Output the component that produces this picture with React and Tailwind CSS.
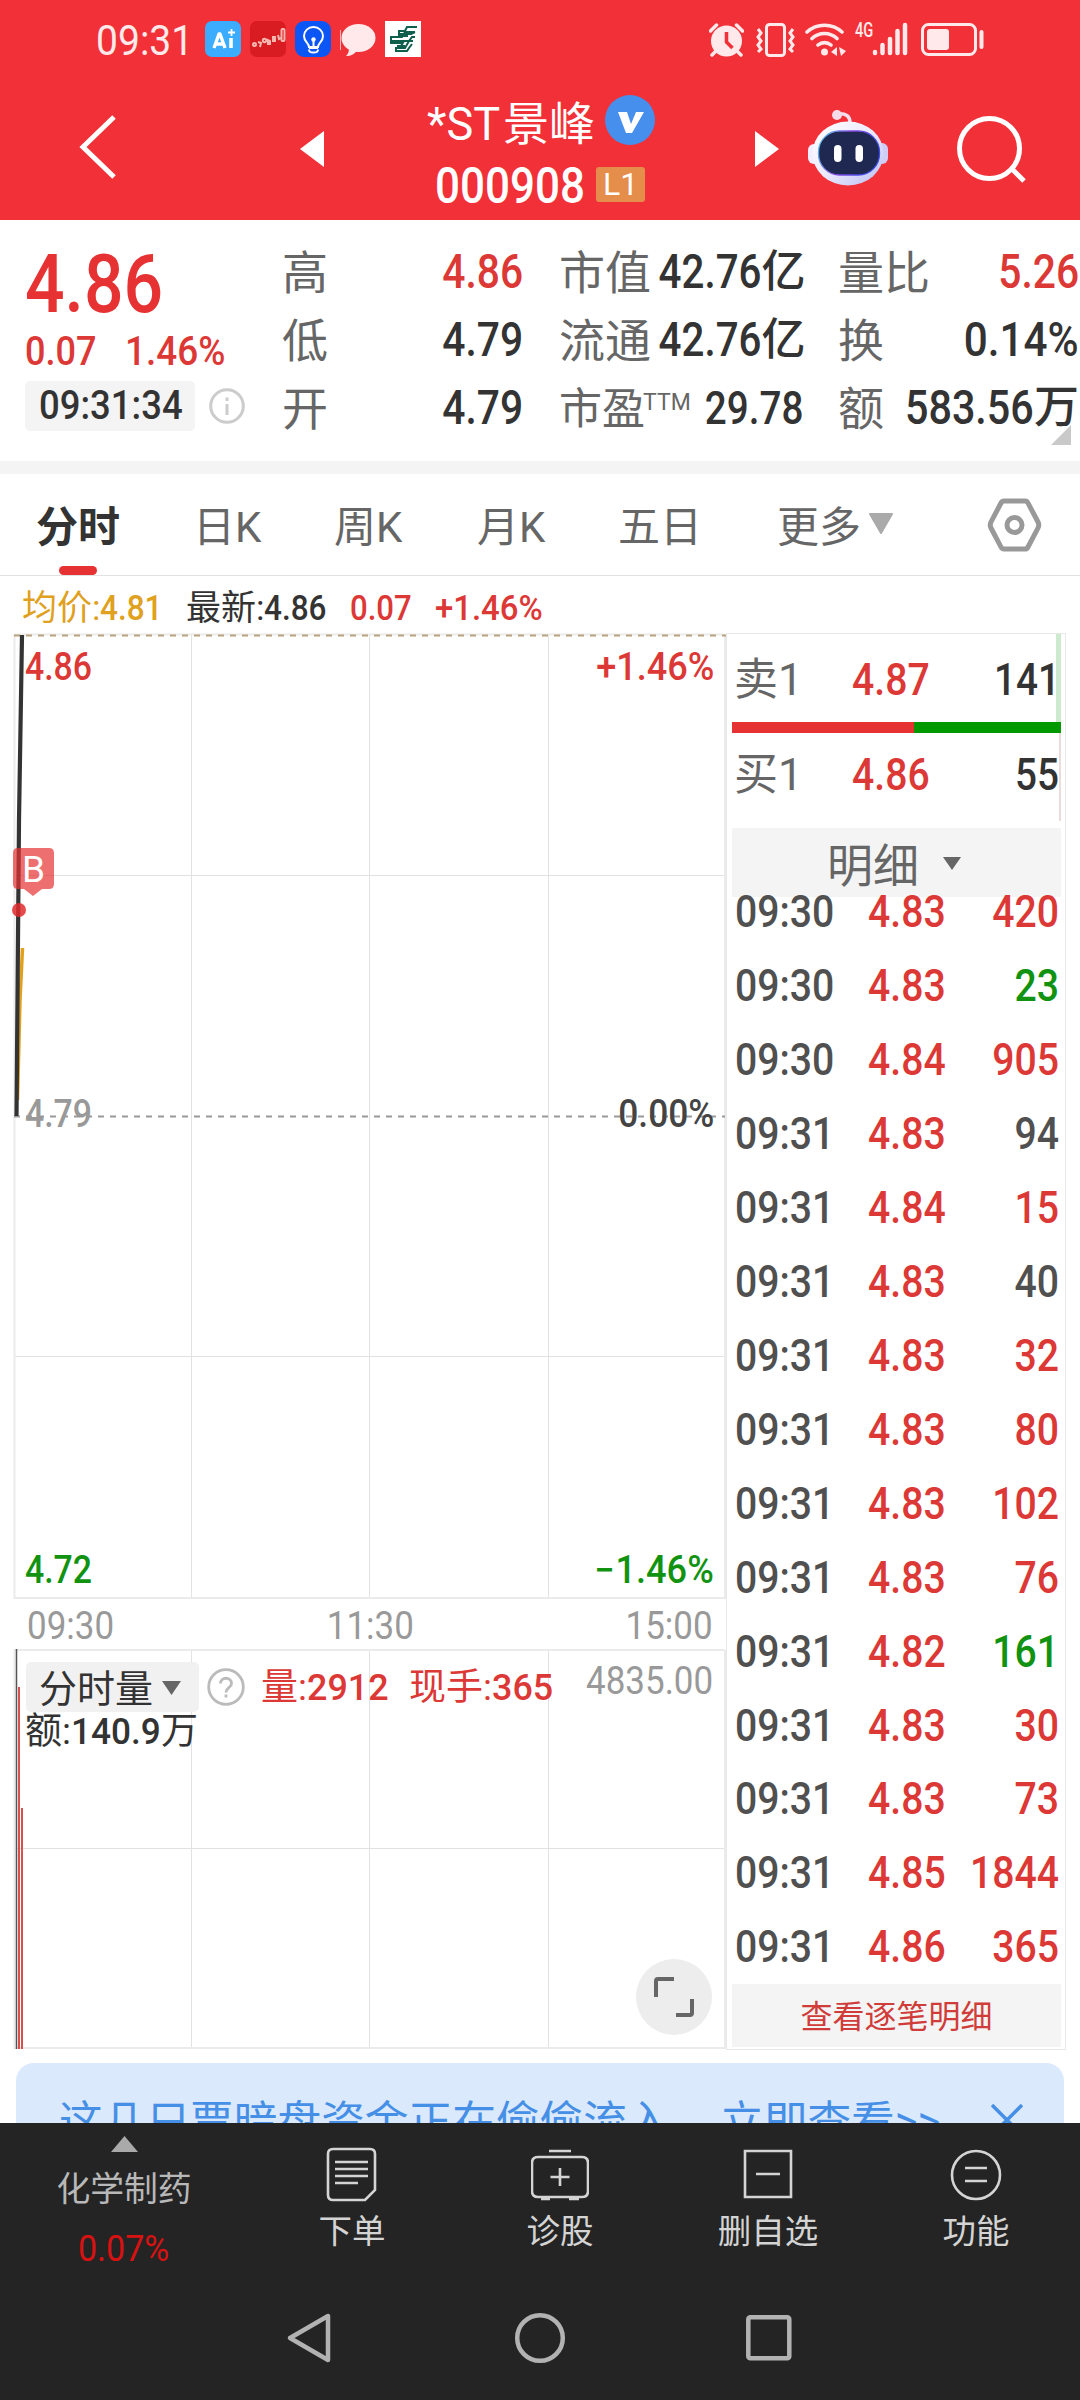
import React from "react";

function N({ children, right, center, w = "scale-x-[0.86]", f = "font-medium", className = "" }) {
  const origin = right ? "origin-right" : center ? "origin-center" : "origin-left";
  return <span className={`inline-block ${w} ${f} ${origin} ${className}`}>{children}</span>;
}

function StatusBar() {
  return (
    <div className="flex h-[77px] items-start text-[#ffe9ea]">
      <div className="ml-[96px] mt-[18px] h-[46px] w-[109px] text-[42px] leading-[46px]">
        <span className="inline-block origin-left scale-x-[0.93]">09:31</span>
      </div>
      <div className="mt-[21px] flex gap-[9px]">
        <div className="flex h-9 w-9 items-center justify-center rounded-[7px] bg-[#3cacff] text-white">
          <svg width="36" height="36" viewBox="0 0 36 36" fill="none" stroke="#fff">
            <path d="M9 27l5-14h1l5 14M11 23h7" strokeWidth="3.4" strokeLinejoin="round" />
            <path d="M26 17v10" strokeWidth="3.6" />
            <path d="M26.5 8v7M23 11.5h7" strokeWidth="1.8" />
          </svg>
        </div>
        <div className="h-9 w-9 overflow-hidden rounded-[7px] bg-[#d91c22]">
          <svg width="36" height="36" viewBox="0 0 36 36" fill="none" stroke="#f4b6ae" strokeWidth="2">
            <circle cx="4.500" cy="23.500" r="1.500" />
            <path d="M8 21l3 1-1 4" />
            <circle cx="14.500" cy="19.500" r="1.700" />
            <path d="M18 19v4h2v-3zM23 16v4h2v-4zM28 14l1 4 2-1" />
            <rect x="31.500" y="8" width="3" height="12" rx="1" />
          </svg>
        </div>
        <div className="h-9 w-9 rounded-[9px] bg-[#0c56f5]">
          <svg width="36" height="36" viewBox="0 0 36 36" fill="none" stroke="#fff" strokeWidth="2">
            <path d="M14 26c0-4-5-5-5-11a9.500 9 0 0 1 19 0c0 6-5 7-5 11z" />
            <path d="M14 28.500c0 3 2 3 4.500 3s4.500 0 4.500-3M14 27h9M18.500 19v7" />
            <circle cx="18.500" cy="18.500" r="2.200" fill="#fff" stroke="none" />
          </svg>
        </div>
        <svg width="36" height="36" viewBox="0 0 36 36">
          <path d="M.5 9v20" stroke="#ffb5b8" strokeWidth="1" />
          <ellipse cx="18.500" cy="17" rx="17" ry="14" fill="#ffe9ea" />
          <path d="M9 27c0 4-1 6-3 8 5 0 9-2 11-6z" fill="#ffe9ea" />
        </svg>
        <div className="h-9 w-9 bg-white">
          <svg width="36" height="36" viewBox="0 0 36 36" fill="none" stroke="#0e5f4c" strokeWidth="2">
            <path d="M32 6H22l-2 4h-6v3h12l4-2M30 11H20l-3 5H6v4h18l3-4h3M28 20h-9l-3 5h-4M5 22h13M27 23l-3 4-2 3H11v-3h9l4-7M13 15h10M15 25h5" />
          </svg>
        </div>
      </div>
      <div className="ml-[288px] mt-[20px] flex items-start">
        <svg className="mr-[11px] mt-[3px]" width="35" height="34" viewBox="0 0 35 34">
          <circle cx="17.500" cy="18" r="15.500" fill="#ffe9ea" />
          <path d="M1.500 8l6-6M33.500 8l-6-6M3 32l5-5M32 32l-5-5" stroke="#ffe9ea" strokeWidth="3.500" strokeLinecap="round" />
          <path d="M17.500 9v10l6 6" stroke="#f13038" strokeWidth="3.500" fill="none" />
        </svg>
        <svg className="mr-[9px] mt-[3px]" width="41" height="34" viewBox="0 0 41 34" fill="none" stroke="#ffe9ea">
          <rect x="11.500" y="1.500" width="18" height="31" rx="3" strokeWidth="3" />
          <path d="M3 6l3 4-3 4 3 4-3 4 3 4-3 3M38 6l-3 4 3 4-3 4 3 4-3 4 3 3" strokeWidth="3" />
        </svg>
        <svg className="mr-[8px] mt-[2px]" width="42" height="35" viewBox="0 0 42 35" fill="none" stroke="#ffe9ea" strokeWidth="3.600" strokeLinecap="round">
          <path d="M2 10a26 26 0 0 1 35 0M7 16.500a18 18 0 0 1 25 0M13 23a10 10 0 0 1 13 0" />
          <circle cx="19.500" cy="30" r="3.500" fill="#ffe9ea" stroke="none" />
          <path d="M32 25v9l-6-4zM34 25l7 4-5 5z" fill="#ffe9ea" stroke="none" />
        </svg>
        <div className="w-[17px] text-[21px] leading-[20px]">
          <span className="inline-block origin-left scale-x-[0.7] font-medium">4G</span>
        </div>
        <svg className="mr-[13px] mt-[2px]" width="36" height="34" viewBox="0 0 36 34" stroke="#ffe9ea" strokeWidth="4.500" strokeLinecap="round">
          <path d="M3 30v1M10.500 23v8M18 17v14M25.500 9v22M33 3v28" />
        </svg>
        <svg className="mt-[3px]" width="64" height="34" viewBox="0 0 64 34" fill="none" stroke="#ffe9ea">
          <rect x="1.500" y="1.500" width="53" height="30" rx="6" strokeWidth="3" />
          <rect x="6" y="6" width="22" height="21" rx="3" fill="#ffe9ea" stroke="none" />
          <path d="M60.500 9v15" strokeWidth="4" strokeLinecap="round" />
        </svg>
      </div>
    </div>
  );
}

function Robot() {
  return (
    <svg width="82" height="78" viewBox="0 0 82 78">
      <defs>
        <linearGradient id="head" x1="0" y1="0" x2="1" y2="1">
          <stop offset="0" stopColor="#ffffff" />
          <stop offset="0.500" stopColor="#eceaff" />
          <stop offset="1" stopColor="#b9bdf0" />
        </linearGradient>
        <linearGradient id="rim" x1="0" y1="0" x2="1" y2="0.300">
          <stop offset="0" stopColor="#4fd0e8" />
          <stop offset="0.500" stopColor="#8a4be0" />
          <stop offset="1" stopColor="#3b4be8" />
        </linearGradient>
      </defs>
      <path d="M30 5c9-1 13 2 13 9" fill="none" stroke="#f4dfee" strokeWidth="3.500" />
      <circle cx="30" cy="6" r="5" fill="#f6dcea" />
      <rect x="1" y="35" width="14" height="20" rx="6" fill="#f1efff" />
      <rect x="67" y="34" width="14" height="21" rx="6" fill="#cfcdf5" />
      <ellipse cx="41" cy="44.500" rx="35.500" ry="32" fill="url(#head)" />
      <rect x="11.500" y="22" width="61" height="44" rx="21" fill="#1e2850" stroke="url(#rim)" strokeWidth="1.300" />
      <rect x="27" y="36" width="7.500" height="17" rx="3.700" fill="#fff" />
      <rect x="48.500" y="36" width="7.500" height="17" rx="3.700" fill="#fff" />
    </svg>
  );
}

function Header() {
  return (
    <div className="flex h-[143px] items-start text-white">
      <svg className="ml-[79px] mt-[38px]" width="38" height="64" viewBox="0 0 38 64" fill="none" stroke="#fff" strokeWidth="5">
        <path d="M35 2L4 32l31 30" />
      </svg>
      <svg className="ml-[183px] mt-[54px]" width="24" height="36" viewBox="0 0 24 36">
        <path d="M24 0v36L0 18z" fill="#fff" />
      </svg>
      <div className="ml-[103px] mt-[16px] w-[230px]">
        <div className="flex h-[58px] items-center text-[46px] leading-[58px]">
          <span className="flex w-[169px] whitespace-nowrap pt-[4px]">
            <span className="w-[76px]"><N f="font-normal" w="scale-x-[0.98]">*ST</N></span>
            <span>景峰</span>
          </span>
          <svg className="ml-[9px] mt-[-5px]" width="50" height="50" viewBox="0 0 50 50">
            <circle cx="25" cy="25" r="25" fill="#468fec" />
            <path d="M13 17h9l4 12 5-12h8L27 38h-6z" fill="#fff" />
          </svg>
        </div>
        <div className="mt-[6px] flex h-[54px] items-center pl-[8px]">
          <div className="w-[161px] pt-[3px] text-[50px] leading-[54px]">
            <N w="scale-x-[0.88]">000908</N>
          </div>
          <div className="flex h-[35px] w-[49px] items-center justify-center rounded-[3px] bg-[#e58d4a] text-[32px] leading-[35px]">L1</div>
        </div>
      </div>
      <svg className="ml-[98px] mt-[54px]" width="24" height="36" viewBox="0 0 24 36">
        <path d="M0 0v36l24-18z" fill="#fff" />
      </svg>
      <div className="ml-[28px] mt-[32px]"><Robot /></div>
      <svg className="ml-[68px] mt-[38px]" width="70" height="70" viewBox="0 0 70 70" fill="none" stroke="#fff" strokeWidth="5">
        <circle cx="32.500" cy="33.500" r="30" />
        <path d="M54 53l13 13" />
      </svg>
    </div>
  );
}

function Quote() {
  const label = "pt-[1px] text-[46px] text-[#666]";
  return (
    <div className="flex h-[241px] bg-white text-[48px] text-[#333]">
      <div className="w-[282px] pl-[25px] pt-[23px]">
        <div className="h-[84px] text-[81px] leading-[84px] text-[#e63233]"><N w="scale-x-[0.86]">4.86</N></div>
        <div className="mt-[1px] flex h-[46px] text-[41px] leading-[46px] text-[#dc3836]">
          <span className="w-[100px]"><N w="scale-x-[0.88]">0.07</N></span>
          <N w="scale-x-[0.9]">1.46%</N>
        </div>
        <div className="mt-[7px] flex items-center">
          <div className="h-[50px] w-[170px] rounded-[5px] bg-[#f4f4f4] pl-[14px] text-[41px] leading-[49px]"><N w="scale-x-[0.89]">09:31:34</N></div>
          <svg className="ml-[14px]" width="36" height="36" viewBox="0 0 36 36" fill="none" stroke="#ccc" strokeWidth="3">
            <circle cx="18" cy="18" r="16.300" />
            <path d="M18 16v11M18 9.500v3.500" />
          </svg>
        </div>
      </div>
      <div className="w-[241px] pt-[18px] leading-[68px]">
        {[["高", "4.86", "text-[#dc3836]"], ["低", "4.79", ""], ["开", "4.79", ""]].map(([k, v, c]) => (
          <div key={k} className="flex h-[68px] justify-between">
            <span className={label}>{k}</span><N right w="scale-x-[0.85]" className={c}>{v}</N>
          </div>
        ))}
      </div>
      <div className="ml-[36px] w-[239px] pt-[18px] leading-[68px]">
        {["市值", "流通"].map((k) => (
          <div key={k} className="flex h-[68px] justify-between whitespace-nowrap">
            <span className={"w-[80px] " + label}>{k}</span>
            <span className="flex"><N right w="scale-x-[0.84]">42.76</N><span className="text-[44px] font-medium">亿</span></span>
          </div>
        ))}
        <div className="flex h-[68px] whitespace-nowrap">
          <span className="w-[84px] pt-[1px] text-[43px] text-[#666]">市盈</span>
          <span className="mt-[-5px] w-[43px] text-[23px] text-[#666]">TTM</span>
          <span className="flex flex-1 justify-end text-[46px]"><N right w="scale-x-[0.84]">29.78</N></span>
        </div>
      </div>
      <div className="relative ml-[40px] w-[241px] pt-[18px] leading-[68px]">
        <div className="flex h-[68px] justify-between"><span className={label}>量比</span><N right w="scale-x-[0.85]" className="text-[#dc3836]">5.26</N></div>
        <div className="flex h-[68px] justify-between"><span className={label}>换</span><N right w="scale-x-[0.88]">0.14%</N></div>
        <div className="flex h-[68px] justify-between whitespace-nowrap">
          <span className={"w-[44px] " + label}>额</span>
          <span className="flex"><N right>583.56</N><span className="text-[45px] font-medium">万</span></span>
        </div>
        <svg className="absolute right-[8px] top-[205px]" width="20" height="20" viewBox="0 0 20 20"><path d="M20 0v20H0z" fill="#c9c9c9" /></svg>
      </div>
    </div>
  );
}

function Tabs() {
  return (
    <div className="flex h-[102px] border-b border-[#e2e2e2] bg-white text-[42px] leading-[107px] text-[#666]">
      <div className="flex w-[160px] flex-col pl-[36px]">
        <div className="h-[92px] font-bold text-[#333]">分时</div>
        <div className="ml-[23px] h-[9px] w-[38px] rounded-full bg-[#e63233]" />
      </div>
      <div className="w-[141px] pl-[33px]">日K</div>
      <div className="w-[141px] pl-[33px]">周K</div>
      <div className="w-[141px] pl-[35px]">月K</div>
      <div className="w-[160px] pl-[35px]">五日</div>
      <div className="flex w-[244px] pl-[34px]">
        <span>更多</span>
        <svg className="ml-[7px] mt-[39px]" width="26" height="22" viewBox="0 0 26 22"><path d="M2 1h22L13 20z" fill="#aaa" stroke="#aaa" strokeWidth="2" strokeLinejoin="round" /></svg>
      </div>
      <svg className="mt-[24px]" width="55" height="54" viewBox="0 0 55 54" fill="none" stroke="#999" strokeWidth="5">
        <path d="M17 3h21q2 0 3 2l10 19q1.500 3 0 6L41 49q-1 2-3 2H17q-2 0-3-2L4 30q-1.500-3 0-6L14 5q1-2 3-2z" />
        <circle cx="27.500" cy="27" r="7.500" />
      </svg>
    </div>
  );
}

function PriceChart() {
  return (
    <div className="relative h-[966px] w-[712px] text-[38px] leading-[46px]">
      <svg className="absolute left-[-2px] top-0" width="714" height="966" viewBox="12 633 714 966" fill="none">
        <path d="M14 875.500H725M14 1356.500H725M191.500 635V1598M369.500 635V1598M548.500 635V1598" stroke="#e2e2e2" />
        <path d="M14 634.500H725M14 1598H725M14.500 634V1599M725 634V1599" stroke="#ebebeb" strokeWidth="2" />
        <path d="M14 635.500H726" stroke="#b9a27e" strokeWidth="2" strokeDasharray="6 6" />
        <path d="M14 1116.500H725" stroke="#999" strokeWidth="2" strokeDasharray="6 6" />
        <path d="M22.500 948L20 1000 17.500 1100" stroke="#e0a020" strokeWidth="3.500" />
        <path d="M22 635L19 820 16.500 1116" stroke="#333" strokeWidth="4.200" />
      </svg>
      <div className="relative flex h-full flex-col justify-between pl-[11px] pr-[12px]">
        <div className="mt-[11px] flex justify-between text-[#dc3836]"><N w="scale-x-[0.89]">4.86</N><N right w="scale-x-[0.95]">+1.46%</N></div>
        <div className="mt-[-10px] flex justify-between"><N w="scale-x-[0.89]" className="text-[#999]">4.79</N><N right w="scale-x-[0.93]" className="text-[#444]">0.00%</N></div>
        <div className="mb-[6px] flex justify-between text-[#119311]"><N w="scale-x-[0.89]">4.72</N><N right w="scale-x-[0.95]"><span className="mr-[1px]">−</span>1.46%</N></div>
      </div>
      <svg className="absolute left-[-2px] top-[214px]" width="44" height="72" viewBox="12 847 44 72">
        <path d="M18 848h31q5 0 5 5v31q0 5-5 5h-7l-9 7-9-7h-6q-5 0-5-5v-31q0-5 5-5z" fill="#e63233" fillOpacity="0.700" />
        <circle cx="19" cy="910" r="7" fill="#e02a2e" fillOpacity="0.850" />
      </svg>
      <div className="absolute left-[8px] top-[216px] text-[37px] leading-[42px] text-white">B</div>
    </div>
  );
}

function VolumeChart() {
  return (
    <div className="relative h-[400px] w-[712px]">
      <svg className="absolute left-[-2px] top-0" width="714" height="400" viewBox="12 1649 714 400" fill="none">
        <path d="M14 1848.500H725M191.500 1650V2048M369.500 1650V2048M548.500 1650V2048" stroke="#e2e2e2" />
        <path d="M14 1650H725M14 2048H725M14.500 1650V2049M725 1650V2049" stroke="#ebebeb" strokeWidth="2" />
        <path d="M16.500 1649V2049" stroke="#555" strokeWidth="1.500" />
        <path d="M19 1687V2049M22 1808V2049" stroke="#d8504d" strokeWidth="2" />
      </svg>
      <div className="relative flex pt-[13px] text-[37px] leading-[52px] text-[#dc3836]">
        <div className="ml-[12px] flex h-[50px] w-[173px] rounded-[5px] bg-[#f1f1f1] pl-[13px] text-[38px] leading-[55px] text-[#333]">
          分时量
          <svg className="ml-[8px] mt-[19px]" width="21" height="14" viewBox="0 0 21 14"><path d="M1 0h19l-9.500 14z" fill="#666" /></svg>
        </div>
        <svg className="ml-[8px] mt-[6px]" width="38" height="38" viewBox="0 0 38 38" fill="none" stroke="#bbb" strokeWidth="2.800">
          <circle cx="19" cy="19" r="17.300" />
          <path d="M13.500 15.500c0-7 11-7 11 0 0 4.500-5.500 4-5.500 9M19 26.500v3" />
        </svg>
        <div className="ml-[16px] w-[148px] whitespace-nowrap">量:<N w="scale-x-[0.97]">2912</N></div>
        <div className="w-[150px] whitespace-nowrap">现手:<N w="scale-x-[0.97]">365</N></div>
        <div className="mt-[-7px] flex w-[154px] justify-end text-[38px] text-[#999]"><N right w="scale-x-[0.92]" f="font-normal">4835.00</N></div>
      </div>
      <div className="relative mt-[-1px] flex pl-[11px] text-[37px] leading-[38px] text-[#333]">
        额:<span className="w-[90px]"><N w="scale-x-[0.95]">140.9</N></span>万
      </div>
      <div className="absolute right-[14px] top-[310px] flex h-[76px] w-[76px] items-center justify-center rounded-full bg-[#ededed]">
        <svg width="42" height="42" viewBox="0 0 42 42" fill="none" stroke="#666" strokeWidth="4">
          <path d="M3 21V5q0-2 2-2h16M39 23v14q0 2-2 2H23" />
        </svg>
      </div>
    </div>
  );
}

const R = "text-[#dc3836]";
const G = "text-[#119311]";
const trades = [
  ["09:30", "4.83", "420", R], ["09:30", "4.83", "23", G], ["09:30", "4.84", "905", R],
  ["09:31", "4.83", "94", "text-[#505050]"], ["09:31", "4.84", "15", R], ["09:31", "4.83", "40", "text-[#505050]"],
  ["09:31", "4.83", "32", R], ["09:31", "4.83", "80", R], ["09:31", "4.83", "102", R],
  ["09:31", "4.83", "76", R], ["09:31", "4.82", "161", G], ["09:31", "4.83", "30", R],
  ["09:31", "4.83", "73", R], ["09:31", "4.85", "1844", R], ["09:31", "4.86", "365", R],
];

function OrderRow({ side, price, qty }) {
  return (
    <div className="flex h-[92px] items-center pl-[2px] text-[44px] text-[#333]">
      <span className="w-[118px] text-[44px] text-[#666]">{side}</span>
      <span className="w-[90px]"><N w="scale-x-[0.89]" className={R}>{price}</N></span>
      <span className="flex flex-1 justify-end"><N right w="scale-x-[0.88]">{qty}</N></span>
    </div>
  );
}

function SidePanel() {
  return (
    <div className="mt-[57px] h-[1417px] w-[340px] border border-[#e8e8e8] pl-[5px] pr-[4px] leading-[74px]">
      <div className="h-[88px] border-r-[5px] border-[#cdeacf]"><div className="mr-[-5px] pr-[1px]"><OrderRow side="卖1" price="4.87" qty="141" /></div></div>
      <div className="flex h-[11px]"><div className="w-[182px] bg-[#e63233]" /><div className="flex-1 bg-[#009900]" /></div>
      <div className="flex h-[88px] flex-col border-r-2 border-[#eddcdc]"><div className="mt-[-4px]"><OrderRow side="买1" price="4.86" qty="55" /></div></div>
      <div className="mt-[7px] flex h-[69px] bg-[#f4f4f4] pl-[95px] text-[46px] text-[#666]">
        <span className="mt-[1px]">明细</span>
        <svg className="ml-[24px] mt-[29px]" width="18" height="13" viewBox="0 0 18 13"><path d="M0 0h18l-9 13z" fill="#666" /></svg>
      </div>
      <div className="h-[1087px] text-[44px] leading-[74px]">
        <div className="h-[52px] leading-[30px]"><Trade row={trades[0]} className="h-[30px]" /></div>
        {trades.slice(1).map((row, i) => <Trade key={i} row={row} className="h-[73.96px]" />)}
      </div>
      <div className="h-[63px] bg-[#f4f4f4] text-center text-[32px] leading-[67px] text-[#d03c3a]">查看逐笔明细</div>
    </div>
  );
}

function Trade({ row: [t, p, q, c], className }) {
  return (
    <div className={"flex items-center pl-[3px] " + className}>
      <span className="w-[133px] text-[#505050]"><N w="scale-x-[0.89]">{t}</N></span>
      <span className="w-[90px]"><N w="scale-x-[0.89]" className={R}>{p}</N></span>
      <span className="flex flex-1 justify-end pr-[2px]"><N right w="scale-x-[0.89]" className={c}>{q}</N></span>
    </div>
  );
}

function Tool({ icon, text }) {
  return (
    <div className="flex w-[208px] flex-col items-center pt-[23px] text-[33.500px] leading-[40px] text-[#d4d4d4]">
      <svg width="58" height="56" viewBox="0 0 58 56" fill="none" stroke="#d4d4d4" strokeWidth="2.600">{icon}</svg>
      <span className="mt-[10px]">{text}</span>
    </div>
  );
}

function BottomBar() {
  return (
    <div className="h-[277px] bg-[#242424]">
      <div className="flex h-[177px]">
        <div className="flex w-[248px] flex-col items-center pt-[13px]">
          <svg width="27" height="16" viewBox="0 0 27 16"><path d="M13.500 0L27 16H0z" fill="#aaa" /></svg>
          <div className="mt-[16px] text-[33.800px] leading-[44px] text-[#b8b8b8]">化学制药</div>
          <div className="mt-[15px] text-[37px] leading-[44px] text-[#d81212]"><N center f="font-normal" w="scale-x-[0.92]">0.07%</N></div>
        </div>
        <Tool text="下单" icon={<path d="M10 3h37q5 0 5 5v36L42 54H10q-5 0-5-5V8q0-5 5-5zM12 16h33M12 23h33M12 30h33M12 37h23" />} />
        <Tool text="诊股" icon={<path d="M18 5h22M7 11h44q6 0 6 6v28q0 6-6 6H7q-6 0-6-6V17q0-6 6-6zM29 22v18M19.500 31h19M10 53h9M38 53h10" />} />
        <Tool text="删自选" icon={<path d="M6 5h46v46H6zM17 28h24" />} />
        <Tool text="功能" icon={<><circle cx="29" cy="29" r="24" /><path d="M18 22h22M18 35h22" /></>} />
      </div>
      <div className="flex items-center pl-[286px] pt-[12px]">
        <svg width="46" height="52" viewBox="0 0 46 52" fill="none" stroke="#b2b2b2" strokeWidth="4.500" strokeLinejoin="round"><path d="M42 4v44L4 26z" /></svg>
        <svg className="ml-[182px]" width="52" height="52" viewBox="0 0 52 52" fill="none" stroke="#b2b2b2" strokeWidth="4.500"><circle cx="26" cy="26" r="22.800" /></svg>
        <svg className="ml-[180px]" width="46" height="46" viewBox="0 0 46 46" fill="none" stroke="#b2b2b2" strokeWidth="4.500"><rect x="2.300" y="2.300" width="41" height="41" rx="2" /></svg>
      </div>
    </div>
  );
}

export default function App() {
  return (
    <div className="h-[2400px] w-[1080px] overflow-hidden bg-white font-['Roboto','Noto_Sans_CJK_SC',sans-serif]">
      <div className="bg-[#f13038]"><StatusBar /><Header /></div>
      <Quote />
      <div className="h-[13px] bg-[#f4f4f4]" />
      <Tabs />
      <div className="flex h-[1487px]">
        <div className="w-[726px] pl-[14px]">
          <div className="flex h-[57px] whitespace-nowrap pl-[8px] text-[35px] leading-[66px] text-[#333]">
            <div className="w-[164px] text-[#e0a020]">均价:<N w="scale-x-[0.9]">4.81</N></div>
            <div className="w-[164px]">最新:<N w="scale-x-[0.9]">4.86</N></div>
            <div className="w-[85px] text-[#dc3836]"><N w="scale-x-[0.89]">0.07</N></div>
            <div className="text-[#dc3836]"><N w="scale-x-[0.94]">+1.46%</N></div>
          </div>
          <PriceChart />
          <div className="flex h-[50px] w-[712px] justify-between pl-[13px] pr-[13px] text-[38px] leading-[54px] text-[#999]">
            <N f="font-normal" w="scale-x-[0.92]">09:30</N>
            <N center f="font-normal" w="scale-x-[0.92]">11:30</N>
            <N right f="font-normal" w="scale-x-[0.92]">15:00</N>
          </div>
          <VolumeChart />
        </div>
        <SidePanel />
      </div>
      <div className="h-[60px] overflow-hidden px-[16px]">
        <div className="flex h-[110px] items-center rounded-[18px] bg-[#dae9fb] pl-[43px] text-[43.700px] leading-[110px] text-[#468fe6]">
          <span className="w-[661px] whitespace-nowrap pt-[7px]">这几只票暗盘资金正在偷偷流入</span>
          <span className="w-[271px] whitespace-nowrap pt-[7px]">立即查看&gt;&gt;</span>
          <svg className="mt-[3px]" width="32" height="32" viewBox="0 0 32 32" stroke="#468fe6" strokeWidth="3.500"><path d="M1 1l30 30M31 1L1 31" /></svg>
        </div>
      </div>
      <BottomBar />
    </div>
  );
}
